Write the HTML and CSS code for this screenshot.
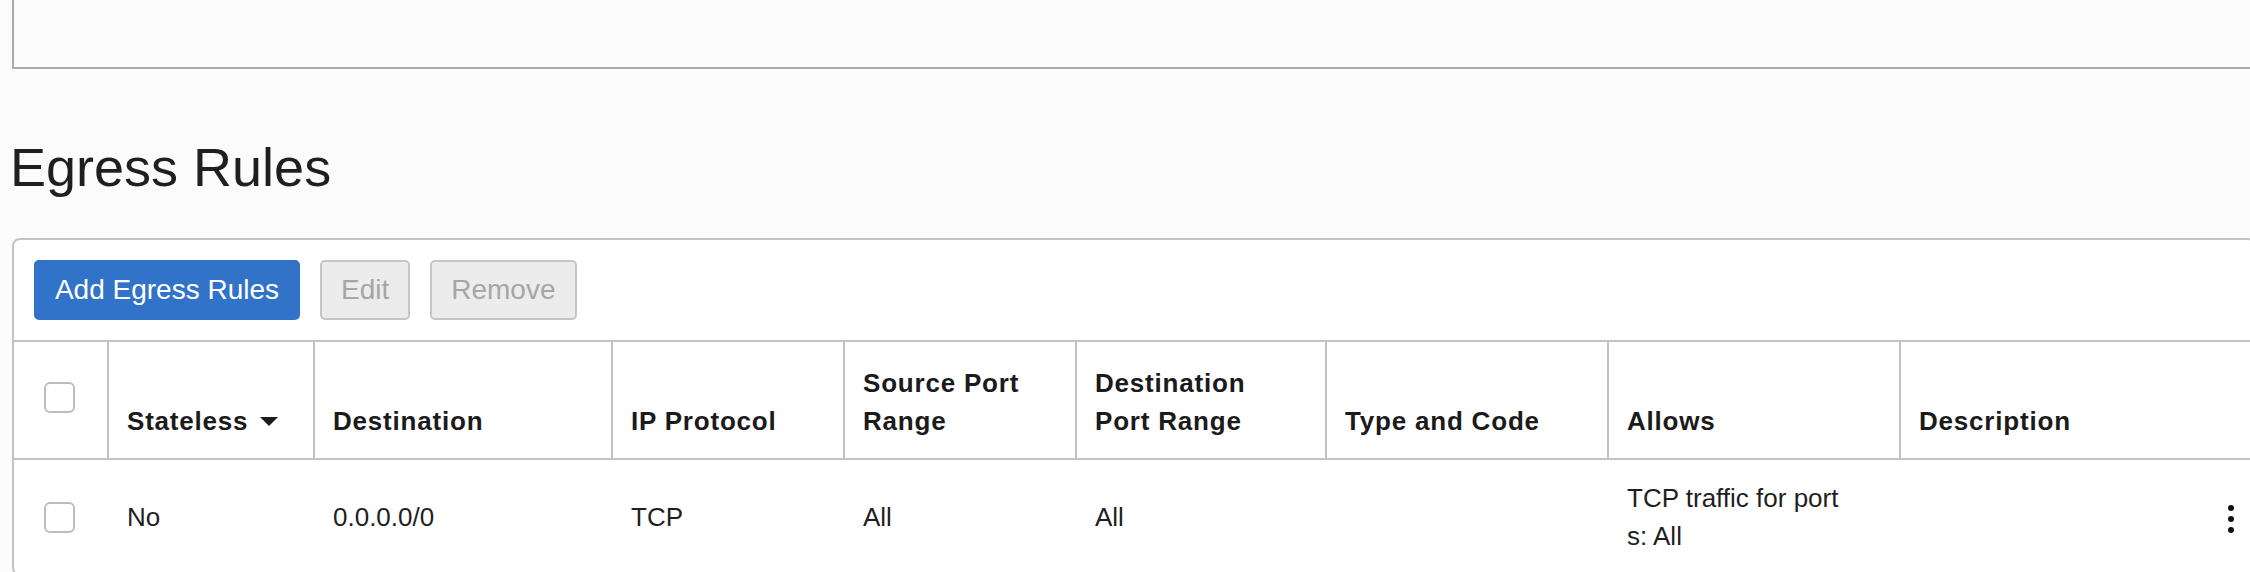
FILE: index.html
```html
<!DOCTYPE html>
<html lang="en">
<head>
<meta charset="utf-8">
<title>Egress Rules</title>
<link rel="stylesheet" href="styles.css">
</head>
<body>
<div class="page">
  <div class="topbox"></div>
  <h1 class="title">Egress Rules</h1>
  <div class="card">
    <div class="toolbar">
      <button class="btn primary" type="button">Add Egress Rules</button>
      <button class="btn disabled" type="button" disabled>Edit</button>
      <button class="btn disabled" type="button" disabled>Remove</button>
    </div>
    <div class="grid head">
      <div class="hcell check"><span class="cb"></span></div>
      <div class="hcell"><span class="sort">Stateless<svg class="caret" width="18" height="9" viewBox="0 0 18 9"><polygon points="0,0 18,0 9,9" fill="#1b1b1b"/></svg></span></div>
      <div class="hcell">Destination</div>
      <div class="hcell">IP Protocol</div>
      <div class="hcell">Source Port Range</div>
      <div class="hcell">Destination Port Range</div>
      <div class="hcell">Type and Code</div>
      <div class="hcell">Allows</div>
      <div class="hcell">Description</div>
    </div>
    <div class="grid row">
      <div class="bcell check"><span class="cb"></span></div>
      <div class="bcell">No</div>
      <div class="bcell">0.0.0.0/0</div>
      <div class="bcell">TCP</div>
      <div class="bcell">All</div>
      <div class="bcell">All</div>
      <div class="bcell"></div>
      <div class="bcell allows">TCP traffic for ports: All</div>
      <div class="bcell actions"><svg class="kebab" width="6" height="28" viewBox="0 0 6 28"><circle cx="3" cy="3" r="3" fill="#111"/><circle cx="3" cy="14" r="3" fill="#111"/><circle cx="3" cy="25" r="3" fill="#111"/></svg></div>
    </div>
  </div>
</div>
</body>
</html>
```
FILE: styles.css
```css
html, body {
  margin: 0;
  padding: 0;
  overflow: hidden;
}

body {
  background: #fbfbfb;
  font-family: "Liberation Sans", Arial, Helvetica, sans-serif;
  color: #1f1f1f;
}

.page {
  padding: 0 0 0 12px;
}

.topbox {
  width: 2244px;
  height: 69px;
  box-sizing: border-box;
  border-left: 2px solid #ababab;
  border-right: 2px solid #ababab;
  border-bottom: 2px solid #ababab;
  background: #fbfbfb;
}

.title {
  margin: 68px 0 41px -2px;
  font-size: 54px;
  line-height: 60px;
  font-weight: normal;
  color: #1f1f1f;
}

.card {
  width: 2244px;
  box-sizing: border-box;
  border: 2px solid #bfc3c8;
  border-radius: 8px;
  background: #fff;
  overflow: hidden;
}

.toolbar {
  display: flex;
  gap: 20px;
  padding: 20px;
}

.btn {
  height: 60px;
  box-sizing: border-box;
  border: 2px solid transparent;
  border-radius: 5px;
  padding: 0 19px;
  font-family: "Liberation Sans", Arial, Helvetica, sans-serif;
  font-size: 28px;
  line-height: 56px;
}

.btn.primary {
  background: #3073c8;
  border-color: #3073c8;
  color: #fff;
  width: 266px;
  padding: 0;
}

.btn.disabled {
  background: #ececec;
  border-color: #c3c5c9;
  color: #a6a6a6;
}

.grid {
  display: grid;
  grid-template-columns: 93px 206px 298px 232px 232px 250px 282px 292px 1fr;
}

.head {
  height: 120px;
  box-sizing: border-box;
  border-top: 2px solid #bfc3c8;
  border-bottom: 2px solid #bfc3c8;
}

.hcell {
  display: flex;
  align-items: flex-end;
  box-sizing: border-box;
  border-left: 2px solid #bfc3c8;
  padding: 0 40px 18px 18px;
  font-size: 26px;
  line-height: 38px;
  font-weight: bold;
  letter-spacing: 0.8px;
  color: #1b1b1b;
}

.hcell.check {
  border-left: none;
  align-items: center;
  padding: 0 0 5px 30px;
}

.sort {
  display: inline-flex;
  align-items: center;
}

.caret {
  margin-left: 12px;
  margin-top: 1px;
}

.cb {
  display: block;
  width: 31px;
  height: 31px;
  box-sizing: border-box;
  border: 2px solid #babec3;
  border-radius: 6px;
  background: #fff;
}

.bcell {
  display: flex;
  align-items: center;
  padding: 19px 18px 19px 20px;
  min-height: 76px;
  font-size: 26px;
  line-height: 38px;
  color: #1f1f1f;
}

.bcell.check {
  padding-left: 30px;
}

.bcell.allows {
  padding-right: 53px;
  word-break: break-all;
}

.bcell.actions {
  justify-content: flex-end;
  padding-right: 20px;
}

.kebab {
  margin-top: 4px;
}
```
